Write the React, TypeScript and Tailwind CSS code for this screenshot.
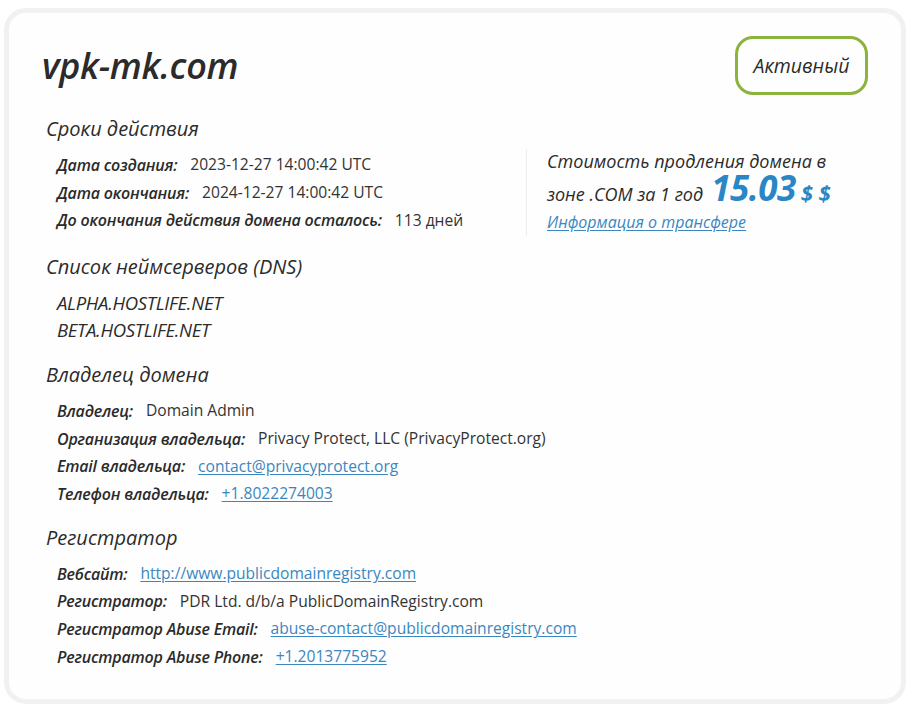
const heading = "font-['Open_Sans',sans-serif] italic font-medium text-[20px] leading-[28px] text-[#2b2b2b] pl-[4px]"
const label = "font-['Open_Sans',sans-serif] italic font-semibold text-[16px] text-[#2b2b2b] tracking-[-0.2px]"
const value = "font-['Open_Sans',sans-serif] text-[15.6px] text-[#333]"
const link = "font-['Open_Sans',sans-serif] text-[15.6px] text-[#3a87c0] underline underline-offset-2"

type Row = { k: string; v: string; href?: boolean }

function Rows({ rows }: { rows: Row[] }) {
  return (
    <div className="pl-[15px]">
      {rows.map((r) => (
        <div key={r.k} className="h-[27.7px] flex items-center gap-[13px]">
          <span className={label}>{r.k}:</span>
          <span className={r.href ? link : value}>{r.v}</span>
        </div>
      ))}
    </div>
  )
}

export default function App() {
  return (
    <div className="min-h-screen bg-white pt-[8px] pl-[4px] pr-[4px]">
      <div className="h-[696px] rounded-[22px] border-[5px] border-[#f0f1f1] bg-[#fefefe] pl-[33px] pr-[33px] pt-[23px]">
        <div className="flex items-center justify-between">
          <h1 className="font-['Open_Sans',sans-serif] italic font-semibold text-[36px] leading-[40px] text-[#2b2b2b] tracking-[-0.3px]">
            vpk-mk.com
          </h1>
          <div className="w-[133px] h-[59px] rounded-[18px] border-[3px] border-[#8cb33c] flex items-center justify-center font-['Open_Sans',sans-serif] italic font-medium text-[19.5px] text-[#2b2b2b]">
            Активный
          </div>
        </div>

        <h2 className={heading + " mt-[20px]"}>Сроки действия</h2>
        <div className="flex mt-[8px]">
          <div className="w-[484px]">
            <Rows
              rows={[
                { k: "Дата создания", v: "2023-12-27 14:00:42 UTC" },
                { k: "Дата окончания", v: "2024-12-27 14:00:42 UTC" },
                { k: "До окончания действия домена осталось", v: "113 дней" },
              ]}
            />
          </div>
          <div className="border-l border-[#ececec] -mt-[2px] h-[87px] pl-[20px] font-['Open_Sans',sans-serif] italic font-medium text-[18px] text-[#2b2b2b]">
            <div className="leading-[24px]">Стоимость продления домена в</div>
            <div className="flex items-baseline gap-[8px] h-[34px] leading-[34px] -mt-[3px]">
              <span>зоне .COM за 1 год</span>
              <span className="text-[35px] leading-none font-bold text-[#2a86c4] tracking-[-0.5px]">15.03</span>
              <span className="text-[22px] leading-none font-bold text-[#2a86c4] -ml-[3px]">$ $</span>
            </div>
            <a className="block mt-[9px] leading-[18px] text-[16px] text-[#3a87c0] underline underline-offset-2">
              Информация о трансфере
            </a>
          </div>
        </div>

        <h2 className={heading + " mt-[17px]"}>Список неймсерверов (DNS)</h2>
        <div className="mt-[8px] pl-[15px] font-['Open_Sans',sans-serif] italic font-medium text-[18.5px] text-[#2b2b2b] tracking-[-0.3px]">
          <div className="h-[27px] flex items-center">ALPHA.HOSTLIFE.NET</div>
          <div className="h-[27px] flex items-center">BETA.HOSTLIFE.NET</div>
        </div>

        <h2 className={heading + " mt-[18px]"}>Владелец домена</h2>
        <div className="mt-[8px]">
          <Rows
            rows={[
              { k: "Владелец", v: "Domain Admin" },
              { k: "Организация владельца", v: "Privacy Protect, LLC (PrivacyProtect.org)" },
              { k: "Email владельца", v: "contact@privacyprotect.org", href: true },
              { k: "Телефон владельца", v: "+1.8022274003", href: true },
            ]}
          />
        </div>

        <h2 className={heading + " mt-[16px]"}>Регистратор</h2>
        <div className="mt-[8px]">
          <Rows
            rows={[
              { k: "Вебсайт", v: "http://www.publicdomainregistry.com", href: true },
              { k: "Регистратор", v: "PDR Ltd. d/b/a PublicDomainRegistry.com" },
              { k: "Регистратор Abuse Email", v: "abuse-contact@publicdomainregistry.com", href: true },
              { k: "Регистратор Abuse Phone", v: "+1.2013775952", href: true },
            ]}
          />
        </div>
      </div>
    </div>
  )
}
